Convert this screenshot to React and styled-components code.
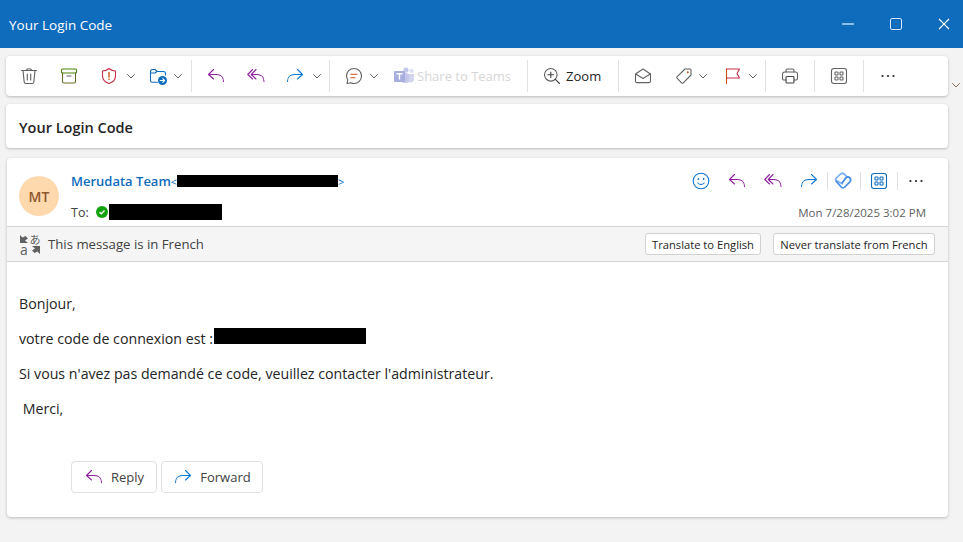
import React from "react";
import styled, { createGlobalStyle } from "styled-components";

const Global = createGlobalStyle`
    html, body { margin: 0; padding: 0; background: #f3f3f3; }
    body { font-family: "Open Sans", "Noto Sans", sans-serif; color: #242424; width: 963px; height: 542px; overflow: hidden; }
    * { box-sizing: border-box; }
`;

const Svg = ({ children, size = 20 }) => (
    <svg width={size} height={size} viewBox="0 0 20 20" fill="none" strokeLinecap="round" strokeLinejoin="round" strokeWidth="1.1">
        {children}
    </svg>
);

const Trash = () => (
    <Svg>
        <path d="M2.5 4.5H17.5M7.5 4.5C7.5 2.2 12.5 2.2 12.5 4.5" stroke="#616161" />
        <path d="M4 4.5L5.2 16C5.3 17 6 17.5 6.8 17.5H13.2C14 17.5 14.7 17 14.8 16L16 4.5" stroke="#616161" />
        <path d="M8.3 8V14M11.7 8V14" stroke="#616161" />
    </Svg>
);
const Archive = () => (
    <Svg>
        <rect x="2.5" y="3" width="15" height="4" rx="1" stroke="#498205" />
        <path d="M3.5 7V15.5C3.5 16.4 4 17 5 17H15C16 17 16.5 16.4 16.5 15.5V7" stroke="#6b6b2a" />
        <path d="M8 10H12" stroke="#616161" />
    </Svg>
);
const Shield = () => (
    <Svg>
        <path d="M10 2.5C12 4.2 14.2 5 16.5 5V10C16.5 13.6 14.2 16 10 17.6C5.8 16 3.5 13.6 3.5 10V5C5.8 5 8 4.2 10 2.5Z" stroke="#c4314b" />
        <path d="M10 6.5V11" stroke="#ca5010" strokeWidth="1.4" />
        <circle cx="10" cy="13.3" r=".8" fill="#ca5010" />
    </Svg>
);
const FolderMove = () => (
    <Svg>
        <path d="M2.5 6V14.5C2.5 15.6 3.2 16.3 4.3 16.3H9.5M2.5 6C2.5 4.6 3.2 3.5 4.5 3.5H7L9 5.5H15.5C16.6 5.5 17.5 6.4 17.5 7.5V9" stroke="#0f6cbd" />
        <path d="M2.5 7H7L9 5.5" stroke="#0f6cbd" />
        <circle cx="14.5" cy="14.5" r="4.5" fill="#0f6cbd" />
        <path d="M12.2 14.5H16.5M14.8 12.7L16.6 14.5L14.8 16.3" stroke="#fff" />
    </Svg>
);
const Reply = () => (
    <Svg>
        <path d="M7.5 3.5L2.5 8.5L7.5 13M2.5 8.5H10.5C14.5 8.5 17.5 11 17.5 15.5" stroke="#8f1f9f" />
    </Svg>
);
const ReplyAll = () => (
    <Svg>
        <path d="M6.5 3.5L1.8 8.5L6.5 13" stroke="#8f1f9f" />
        <path d="M10 3.5L5.3 8.5L10 13M5.3 8.5H11C15 8.5 18 11 18 15.5" stroke="#8f1f9f" />
    </Svg>
);
const Forward = () => (
    <Svg>
        <path d="M12.5 3.5L17.5 8.5L12.5 13M17.5 8.5H9.5C5.5 8.5 2.5 11 2.5 15.5" stroke="#0f78d4" />
    </Svg>
);
const Chat = () => (
    <Svg>
        <path d="M10 2.5C14.2 2.5 17.5 5.8 17.5 10C17.5 14.2 14.2 17.5 10 17.5C8.8 17.5 7.6 17.2 6.6 16.7L3 17.5L3.8 14C3 12.7 2.5 11.4 2.5 10C2.5 5.8 5.8 2.5 10 2.5Z" stroke="#616161" />
        <path d="M7 8.3H13M7 11.7H11" stroke="#ca5010" />
    </Svg>
);
const Teams = () => (
    <svg width="22" height="20" viewBox="0 0 22 20">
        <circle cx="13" cy="4" r="2.6" fill="#c5c8ea" />
        <circle cx="18.5" cy="5" r="2" fill="#dcdef2" />
        <path d="M11 8H21V13C21 15 19.5 16.5 17.5 16.5C15 16.5 13 15 12 13Z" fill="#d3d5ef" />
        <rect x="8" y="7" width="8" height="10" rx="3" fill="#c5c8ea" />
        <rect x="1" y="5" width="11" height="11" rx="1" fill="#a9aee0" />
        <path d="M3.5 7.8H9.5M6.5 7.8V13.6" stroke="#fff" strokeWidth="1.4" />
    </svg>
);
const ZoomIcon = () => (
    <Svg>
        <circle cx="8.8" cy="8.8" r="6.3" stroke="#616161" />
        <path d="M13.4 13.4L17.5 17.5" stroke="#424242" />
        <path d="M8.8 6V11.6M6 8.8H11.6" stroke="#424242" />
    </Svg>
);
const Envelope = () => (
    <Svg>
        <path d="M2.5 8L10 3L17.5 8V15C17.5 16 16.8 16.6 16 16.6H4C3.2 16.6 2.5 16 2.5 15Z" stroke="#616161" />
        <path d="M2.8 8L10 12.5L17.2 8" stroke="#616161" />
    </Svg>
);
const Tag = () => (
    <Svg>
        <path d="M11 3H16C16.6 3 17 3.4 17 4V9L9.3 16.8C8.8 17.3 8.1 17.3 7.6 16.8L3.2 12.4C2.7 11.9 2.7 11.2 3.2 10.7Z" stroke="#616161" />
        <circle cx="13.8" cy="6.2" r="1" fill="#ca5010" />
    </Svg>
);
const Flag = () => (
    <Svg>
        <path d="M3.5 17.5V3" stroke="#ca5010" />
        <path d="M3.5 3H16.5L14 7.5L16.5 12H3.5" stroke="#c4314b" />
    </Svg>
);
const Printer = () => (
    <Svg>
        <path d="M6 6V4.5C6 3.7 6.7 3 7.5 3H12.5C13.3 3 14 3.7 14 4.5V6" stroke="#616161" />
        <path d="M6 14H4C3.2 14 2.5 13.3 2.5 12.5V8C2.5 6.9 3.4 6 4.5 6H15.5C16.6 6 17.5 6.9 17.5 8V12.5C17.5 13.3 16.8 14 16 14H14" stroke="#616161" />
        <rect x="6" y="10.5" width="8" height="6.5" rx="1" stroke="#424242" />
    </Svg>
);
const Apps = ({ color = "#616161" }) => (
    <Svg>
        <rect x="2.5" y="2.5" width="15" height="15" rx="2.5" stroke={color} />
        <rect x="6" y="6" width="3" height="3" rx=".6" stroke={color} />
        <rect x="11" y="6" width="3" height="3" rx=".6" stroke={color} />
        <rect x="6" y="11" width="3" height="3" rx=".6" stroke={color} />
        <rect x="11" y="11" width="3" height="3" rx=".6" stroke={color} />
    </Svg>
);
const More = () => (
    <Svg>
        <circle cx="4.5" cy="10" r="1.1" fill="#242424" />
        <circle cx="10" cy="10" r="1.1" fill="#242424" />
        <circle cx="15.5" cy="10" r="1.1" fill="#242424" />
    </Svg>
);
const Smile = () => (
    <Svg>
        <circle cx="10" cy="10" r="7.8" stroke="#0f78d4" />
        <circle cx="7.4" cy="8" r=".9" fill="#0f78d4" />
        <circle cx="12.6" cy="8" r=".9" fill="#0f78d4" />
        <path d="M6.8 12C8.5 14 11.5 14 13.2 12" stroke="#0f78d4" />
    </Svg>
);
const Viva = () => (
    <Svg>
        <path d="M9.5 12.8L3.2 9.6C2.4 8.8 2.4 7.9 3.2 7.1L7.4 3.2C8.6 2.2 10.4 2.2 11.5 3.3L14 5.8" stroke="#7fb2f2" strokeWidth="1.8" />
        <path d="M3.2 10.5L8.3 16C9.3 17.1 10.8 17.1 11.8 16L16.8 10.8C17.8 9.7 17.8 8 16.8 6.9C15.7 5.7 14 5.7 12.9 6.9L9.3 11.8" stroke="#4a8fe6" strokeWidth="1.8" />
    </Svg>
);
const Chev = ({ color = "#616161" }) => (
    <svg width="10" height="10" viewBox="0 0 10 10" fill="none">
        <path d="M1.5 3.5L5 7L8.5 3.5" stroke={color} strokeWidth="1" strokeLinecap="round" strokeLinejoin="round" />
    </svg>
);
const CornerArrow = ({ flip }) => (
    <svg width="9" height="9" viewBox="0 0 9 9" fill="#616161" style={flip ? { transform: "rotate(180deg)" } : undefined}>
        <path d="M0 0L2.5 2.5L5.5 1L8 3.5L5 5.5L8 8H0Z" />
    </svg>
);

const TranslateMark = styled.div`
    width: 22px;
    height: 21px;
    display: grid;
    grid-template-columns: 10px 12px;
    grid-template-rows: 11px 10px;
    align-items: center;
    justify-items: center;
    color: #616161;
    line-height: 10px;
`;
const MarkLatin = styled.span`
    font-size: 14px;
`;
const MarkKana = styled.span`
    font-size: 11px;
    font-family: "Noto Sans CJK JP", sans-serif;
`;

const TitleBar = styled.div`
    height: 48px;
    background: #0f6cbd;
    display: flex;
    align-items: center;
    padding: 0 7px 0 9px;
    color: #fff;
    font-size: 13.5px;
`;
const TitleText = styled.div`
    flex: 1;
    padding-top: 2px;
`;
const WinControls = styled.div`
    display: flex;
    gap: 24px;
`;
const WinButton = styled.div`
    width: 24px;
    display: flex;
    justify-content: center;
`;
const Content = styled.div`
    padding: 8px 15px 0 6px;
    position: relative;
`;
const Card = styled.div`
    background: #fff;
    border-radius: 4px;
    box-shadow: 0 1px 3px rgba(0, 0, 0, 0.24);
`;
const Toolbar = styled(Card)`
    height: 40px;
    display: flex;
    align-items: center;
    padding-left: 13px;
`;
const Tool = styled.div`
    display: flex;
    align-items: center;
    justify-content: center;
    flex: none;
    margin-left: ${(p) => p.$ml || 0}px;
`;
const Sep = styled.div`
    width: 1px;
    height: 32px;
    background: #e0e0e0;
    flex: none;
    margin-left: ${(p) => p.$ml || 0}px;
`;
const ToolLabel = styled.span`
    font-size: 13px;
    flex: none;
    margin-left: ${(p) => p.$ml || 0}px;
    color: ${(p) => (p.$off ? "#d6d6d6" : "#242424")};
`;
const Collapse = styled.div`
    position: absolute;
    right: 2px;
    top: 32px;
    display: flex;
`;
const Subject = styled(Card)`
    height: 44px;
    margin-top: 8px;
    display: flex;
    align-items: center;
    padding: 2px 0 0 13px;
    font-size: 14.5px;
    font-weight: 600;
`;
const Message = styled(Card)`
    height: 359px;
    margin: 10px 0 0 1px;
`;
const Header = styled.div`
    height: 68px;
    display: flex;
    padding: 18px 14px 0 12px;
`;
const Avatar = styled.div`
    width: 40px;
    height: 40px;
    border-radius: 50%;
    background: #ffd9ae;
    color: #8e562e;
    font-size: 14px;
    font-weight: 600;
    display: flex;
    align-items: center;
    justify-content: center;
    flex: none;
`;
const Who = styled.div`
    margin-left: 12px;
    flex: 1;
    margin-top: -4px;
`;
const Sender = styled.div`
    height: 18px;
    display: flex;
    align-items: center;
    font-size: 13px;
    font-weight: 600;
    color: #0f6cbd;
`;
const Bracket = styled.span`
    font-weight: 400;
    font-size: 11px;
    color: #0f6cbd;
`;
const Redacted = styled.span`
    display: inline-block;
    background: #000;
    flex: none;
    width: ${(p) => p.$w}px;
    height: ${(p) => p.$h}px;
    margin-left: ${(p) => p.$ml || 0}px;
    margin-bottom: ${(p) => p.$mb || 0}px;
`;
const ToLine = styled.div`
    display: flex;
    align-items: center;
    margin-top: 14px;
    height: 16px;
    font-size: 12.5px;
    color: #424242;
`;
const Presence = styled.span`
    width: 12px;
    height: 12px;
    border-radius: 50%;
    background: #13a10e;
    margin: 0 1px 0 7px;
    display: flex;
    align-items: center;
    justify-content: center;
`;
const Side = styled.div`
    display: flex;
    flex-direction: column;
    align-items: flex-end;
    margin-top: -7px;
`;
const Actions = styled.div`
    display: flex;
    align-items: center;
    height: 24px;
    margin-right: 8px;
`;
const MiniSep = styled(Sep)`
    height: 18px;
`;
const Stamp = styled.div`
    font-size: 11.5px;
    color: #616161;
    margin-top: 12px;
    margin-right: 8px;
`;
const InfoBar = styled.div`
    height: 36px;
    background: #f5f5f5;
    border-top: 1px solid #d6d6d6;
    border-bottom: 1px solid #d6d6d6;
    display: flex;
    align-items: center;
    padding: 0 13px 0 12px;
    font-size: 13.2px;
    color: #424242;
`;
const InfoText = styled.span`
    flex: 1;
    margin-left: 7px;
`;
const SmallButton = styled.div`
    height: 22px;
    width: ${(p) => p.$w}px;
    background: #fff;
    border: 1px solid #d1d1d1;
    border-radius: 3px;
    font-size: 11.2px;
    color: #242424;
    display: flex;
    align-items: center;
    justify-content: center;
    margin-left: ${(p) => p.$ml || 0}px;
`;
const Body = styled.div`
    padding: 24px 12px 0;
    font-size: 14.2px;
    color: #242424;
`;
const Para = styled.div`
    height: 35px;
    display: flex;
    align-items: center;
    white-space: pre;
`;
const ReplyRow = styled.div`
    display: flex;
    gap: 4px;
    margin: 35px 0 0 52px;
`;
const ReplyButton = styled.div`
    height: 32px;
    width: ${(p) => p.$w}px;
    border: 1px solid #e0e0e0;
    border-radius: 4px;
    display: flex;
    align-items: center;
    justify-content: center;
    gap: 7px;
    font-size: 13px;
    color: #424242;
`;

export default function App() {
    return (
        <>
            <Global />
            <TitleBar>
                <TitleText>Your Login Code</TitleText>
                <WinControls>
                    <WinButton>
                        <svg width="12" height="12" viewBox="0 0 12 12"><path d="M0 6H12" stroke="#b9d7f2" strokeWidth="1.5" /></svg>
                    </WinButton>
                    <WinButton>
                        <svg width="12" height="12" viewBox="0 0 12 12" fill="none"><rect x=".5" y=".5" width="11" height="11" rx="1.5" stroke="#cfe6fa" /></svg>
                    </WinButton>
                    <WinButton>
                        <svg width="12" height="12" viewBox="0 0 12 12" fill="none"><path d="M1 1L11 11M11 1L1 11" stroke="#fff" strokeWidth="1.1" /></svg>
                    </WinButton>
                </WinControls>
            </TitleBar>
            <Content>
                <Toolbar>
                    <Tool><Trash /></Tool>
                    <Tool $ml={20}><Archive /></Tool>
                    <Tool $ml={20}><Shield /></Tool>
                    <Tool $ml={7}><Chev /></Tool>
                    <Tool $ml={12}><FolderMove /></Tool>
                    <Tool $ml={5}><Chev /></Tool>
                    <Sep $ml={8} />
                    <Tool $ml={14}><Reply /></Tool>
                    <Tool $ml={20}><ReplyAll /></Tool>
                    <Tool $ml={19}><Forward /></Tool>
                    <Tool $ml={7}><Chev /></Tool>
                    <Sep $ml={7} />
                    <Tool $ml={14}><Chat /></Tool>
                    <Tool $ml={5}><Chev /></Tool>
                    <Tool $ml={14}><Teams /></Tool>
                    <ToolLabel $ml={2} $off>Share to Teams</ToolLabel>
                    <Sep $ml={16} />
                    <Tool $ml={14}><ZoomIcon /></Tool>
                    <ToolLabel $ml={4}>Zoom</ToolLabel>
                    <Sep $ml={17} />
                    <Tool $ml={14}><Envelope /></Tool>
                    <Tool $ml={21}><Tag /></Tool>
                    <Tool $ml={4}><Chev /></Tool>
                    <Tool $ml={15}><Flag /></Tool>
                    <Tool $ml={5}><Chev /></Tool>
                    <Sep $ml={7} />
                    <Tool $ml={14}><Printer /></Tool>
                    <Sep $ml={14} />
                    <Tool $ml={14}><Apps /></Tool>
                    <Sep $ml={14} />
                    <Tool $ml={14}><More /></Tool>
                </Toolbar>
                <Collapse><Chev color="#8a6a55" /></Collapse>
                <Subject>Your Login Code</Subject>
                <Message>
                    <Header>
                        <Avatar>MT</Avatar>
                        <Who>
                            <Sender>
                                Merudata Team<Bracket>&lt;</Bracket><Redacted $w={161} $h={12} /><Bracket>&gt;</Bracket>
                            </Sender>
                            <ToLine>
                                To:
                                <Presence>
                                    <svg width="8" height="8" viewBox="0 0 8 8" fill="none"><path d="M1.5 4.2L3.3 5.8L6.5 2.5" stroke="#fff" strokeWidth="1.3" /></svg>
                                </Presence>
                                <Redacted $w={113} $h={16} />
                            </ToLine>
                        </Who>
                        <Side>
                            <Actions>
                                <Tool><Smile /></Tool>
                                <Tool $ml={16}><Reply /></Tool>
                                <Tool $ml={16}><ReplyAll /></Tool>
                                <Tool $ml={16}><Forward /></Tool>
                                <MiniSep $ml={8} />
                                <Tool $ml={5}><Viva /></Tool>
                                <MiniSep $ml={7} />
                                <Tool $ml={8}><Apps color="#0f6cbd" /></Tool>
                                <MiniSep $ml={8} />
                                <Tool $ml={8}><More /></Tool>
                            </Actions>
                            <Stamp>Mon 7/28/2025 3:02 PM</Stamp>
                        </Side>
                    </Header>
                    <InfoBar>
                        <TranslateMark>
                            <CornerArrow />
                            <MarkKana>あ</MarkKana>
                            <MarkLatin>a</MarkLatin>
                            <CornerArrow flip />
                        </TranslateMark>
                        <InfoText>This message is in French</InfoText>
                        <SmallButton $w={116}>Translate to English</SmallButton>
                        <SmallButton $w={162} $ml={12}>Never translate from French</SmallButton>
                    </InfoBar>
                    <Body>
                        <Para>Bonjour,</Para>
                        <Para>votre code de connexion est :<Redacted $w={152} $h={16} $ml={1} $mb={5} /></Para>
                        <Para>Si vous n'avez pas demandé ce code, veuillez contacter l'administrateur.</Para>
                        <Para>{" Merci,"}</Para>
                        <ReplyRow>
                            <ReplyButton $w={86}><Reply />Reply</ReplyButton>
                            <ReplyButton $w={102}><Forward />Forward</ReplyButton>
                        </ReplyRow>
                    </Body>
                </Message>
            </Content>
        </>
    );
}
